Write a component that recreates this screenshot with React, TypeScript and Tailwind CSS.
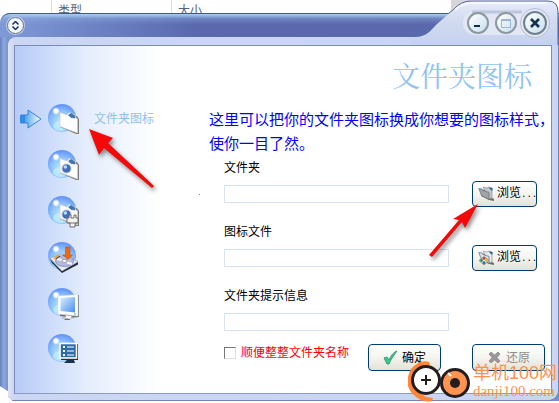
import React from "react";

const font = "font-['Liberation_Sans','Noto_Sans_CJK_SC',sans-serif]";

function Orb() {
  return (
    <>
      <circle cx="14" cy="14" r="14" fill="url(#orb)" />
      <ellipse cx="13" cy="22" rx="8" ry="5" fill="#c9f6ff" opacity=".6" />
      <circle cx="8" cy="7" r="4" fill="url(#shine)" />
    </>
  );
}

function Sheet({ camera, plug }: { camera?: boolean; plug?: boolean }) {
  return (
    <>
      <path d="M13 9l8 3 8 0 2 3v15l-3 0-16-7z" fill="#6d6a62" opacity=".85" />
      <path d="M12 8.500L19 11l2-2.500 6 2.500 1 3 1.500 1V29L12 22.500z" fill="#fdfdfe" stroke="#c9cfdb" strokeWidth=".7" />
      <path d="M20.500 11l2.500-1.500 3.500 2 .5 2.500-4-.5z" fill="#3d76b4" stroke="#254f80" strokeWidth=".5" />
      {camera && (
        <>
          <circle cx="18.500" cy="18.500" r="5" fill="#c3c8d6" />
          <circle cx="18.500" cy="18.500" r="4" fill="#416fbe" />
          <circle cx="17.300" cy="17" r="1.800" fill="#b8dcff" />
        </>
      )}
      {plug && (
        <>
          <path d="M21 19h2v3h3v-3h2v3h2v5h-3v4h-5v-4h-3v-5h2z" fill="#f2f2f0" stroke="#6f6c68" strokeWidth="1" />
          <path d="M20 27h9" stroke="#77736c" />
        </>
      )}
    </>
  );
}

const icons: { name: string; art: React.ReactNode }[] = [
  { name: "文件夹图标", art: <Sheet /> },
  { name: "图片", art: <Sheet camera /> },
  { name: "设备", art: <Sheet camera plug /> },
  {
    name: "磁盘",
    art: (
      <>
        <path d="M2 17l12 12 16-9v2.500L14 31 4 21z" fill="#252b3c" />
        <path d="M2 16l12-4 16 7.500L14 29z" fill="#e9ebf3" stroke="#8c93a8" strokeWidth=".6" />
        <ellipse cx="16.500" cy="19" rx="9" ry="5.500" fill="#b4b9de" stroke="#7f87b0" strokeWidth=".8" />
        <path d="M9 17l5 1M19 20.500l5 1.500" stroke="#f6f7ff" strokeWidth="2" />
        <ellipse cx="16.500" cy="19" rx="2.500" ry="1.500" fill="#fff" stroke="#777" strokeWidth=".6" />
        <path d="M6 17l5-4" stroke="#e9a13a" strokeWidth="1.800" />
        <path d="M8 17l4-3" stroke="#3a3a42" strokeWidth="1" />
        <path d="M17.500 5h4.500v8h2.500L20 17.500 15 13h2.500z" fill="#f0690c" stroke="#b84708" strokeWidth=".5" />
      </>
    ),
  },
  {
    name: "显示器",
    art: (
      <>
        <path d="M12 8l19-1v22l-9 1v2h-6l3-3-7-1z" fill="#5b5f62" opacity=".85" />
        <path d="M10 8l20-1.500V28l-20-2z" fill="#fff" stroke="#d5d9dd" strokeWidth=".6" />
        <path d="M12.500 10l14.500-1v15.500L12.500 23z" fill="url(#screen)" />
        <path d="M17 27l7 1-1 1.500h3l-4 1.500-8-1 4-1z" fill="#fff" stroke="#999" strokeWidth=".5" />
        <path d="M26 26h2" stroke="#40b956" />
      </>
    ),
  },
  {
    name: "设置",
    art: (
      <>
        <path d="M13 10h17v16h-4l1 3H16l3-3h-6z" fill="#143650" />
        <rect x="12" y="9.500" width="16.500" height="14.500" fill="#2c6da9" stroke="#fff" strokeWidth="1.600" />
        <path d="M19 13h7M19 17h7M19 21h7" stroke="#fff" strokeWidth="1.200" />
        <path d="M15 13h2M15 17h2M15 21h2" stroke="#fff" strokeWidth="2" />
      </>
    ),
  },
];

function Sidebar() {
  return (
    <nav className="flex w-[194px] shrink-0 flex-col gap-4 pt-[58px] pl-[5px]">
      {icons.map(({ name, art }, i) => (
        <div key={name} className="flex items-center">
          <span className="w-7">
            {i === 0 && (
              <svg width="22" height="20" viewBox="0 0 22 20" className="block">
                <path d="M1 6h7V1l13 9-13 9v-5H1z" fill="url(#pointer)" stroke="#3781dc" strokeWidth="1" strokeLinejoin="round" />
                <path d="M1 6v8M4 6v8" stroke="#2580e4" strokeWidth="1.500" />
              </svg>
            )}
          </span>
          <button aria-label={name} className="block h-[30px] w-8">
            <svg width="32" height="32" viewBox="0 0 32 32" className="block">
              <Orb />
              {art}
            </svg>
          </button>
          {i === 0 && <span className="pl-[14px] text-[12px] leading-4 whitespace-nowrap text-[#8fc1f0]">{name}</span>}
        </div>
      ))}
    </nav>
  );
}

function FolderIcon({ picture }: { picture?: boolean }) {
  return (
    <svg width="17" height="16" viewBox="0 0 17 16" className="shrink-0">
      <path d="M4 4l10-2v10l2 1v2l-5-1-8-4z" fill="#6b7075" />
      <path d="M5 1l4 1 2-1 3 1v10l-3 1z" fill={picture ? "#e6e8e9" : "#c2c4c5"} stroke="#84898d" strokeWidth=".6" />
      <path d="M10.500 1.500l4 .5v3l-2-1.500z" fill="#147193" />
      <path d="M.800 2.500L4 3l1 1.500 6 2v7L3.500 9.500z" fill={picture ? "#dfe1e2" : "#a1a3a5"} stroke="#6f757a" strokeWidth=".8" />
      {picture && (
        <>
          <path d="M6 6.500l5 4-5 4.500-5-4.500z" fill="#eee" stroke="#555" strokeWidth=".6" />
          <circle cx="6" cy="8.500" r="1.400" fill="#d63c2f" />
          <circle cx="8.500" cy="10.500" r="1.400" fill="#ddb71d" />
          <circle cx="3.500" cy="10.500" r="1.400" fill="#269849" />
          <circle cx="6" cy="12.700" r="1.400" fill="#246ac1" />
        </>
      )}
    </svg>
  );
}

const buttonBase =
  "flex shrink-0 items-center rounded-[4px] border border-[#003c74] bg-linear-to-b from-white via-[#f5f4ef] to-[#e4e2d7] whitespace-nowrap text-[12px] leading-4";

function Field({ id, label, browse }: { id: string; label: string; browse?: "folder" | "picture" }) {
  return (
    <div className="flex flex-col gap-[5px]">
      <label htmlFor={id} className="text-[12px] leading-4 text-black">{label}</label>
      <div className="flex h-[26px] items-center gap-[23px]">
        <input id={id} type="text" className="h-[18px] min-w-0 flex-1 border border-[#d5e3f2] bg-white px-1 text-[12px] outline-none" />
        {browse ? (
          <button className={`${buttonBase} h-[26px] w-[65px] gap-[2px] pl-[5px] text-black`}>
            <FolderIcon picture={browse === "picture"} />
            <span>
              浏览<span className="font-['Liberation_Mono',monospace] text-[9px]">...</span>
            </span>
          </button>
        ) : (
          <span className="w-[65px] shrink-0" />
        )}
      </div>
    </div>
  );
}

function MainForm() {
  return (
    <main className="flex min-w-0 flex-1 flex-col pt-[14px] pb-[22px]">
      <h1 className="pr-[19px] text-right font-['Liberation_Serif','Noto_Serif_CJK_SC','Noto_Sans_CJK_SC',serif] text-[28px] leading-9 font-normal text-[#8fc4f5]">
        文件夹图标
      </h1>
      <p className="mt-3 text-[15px] leading-6 whitespace-nowrap text-[#0000ff]">
        这里可以把你的文件夹图标换成你想要的图标样式，
        <br />
        使你一目了然。
      </p>
      <form className="mt-1 flex flex-col pl-[15px]" onSubmit={(e) => e.preventDefault()}>
        <div className="flex flex-col gap-[17px] pr-[14px]">
          <Field id="folder" label="文件夹" browse="folder" />
          <Field id="icon-file" label="图标文件" browse="picture" />
          <Field id="tip" label="文件夹提示信息" />
        </div>
        <div className="mt-[9px] flex items-start pr-[6px]">
          <label className="flex flex-1 items-center gap-[5px] pt-px text-[12px] leading-4 whitespace-nowrap text-[#ff0000]">
            <input type="checkbox" className="size-[12px] appearance-none border border-t-[#777] border-r-[#ddd] border-b-[#ddd] border-l-[#777] bg-white checked:bg-[#3781dc]" />
            顺便整整文件夹名称
          </label>
          <div className="flex shrink-0 gap-[31px]">
            <button className={`${buttonBase} h-[27px] w-[73px] gap-1 pl-[14px] text-black`}>
              <svg width="15" height="15" viewBox="0 0 15 15" className="shrink-0">
                <path d="M1 8l3-1 2 3C8 5 11 2 14 1 11 5 8 9 6 14H4z" fill="#3ccb8b" stroke="#248d67" strokeWidth=".8" />
              </svg>
              确定
            </button>
            <button className={`${buttonBase} h-[27px] w-[73px] gap-[5px] pl-[15px] text-[#8e8d87]`}>
              <svg width="13" height="13" viewBox="0 0 13 13" className="shrink-0">
                <path d="M1 3l2-2 3.500 3L10 1l2 2-3 3.500 3 3.500-2 2-3.500-3L3 12l-2-2 3-3.500z" fill="#999" stroke="#777" strokeWidth=".6" />
              </svg>
              还原
            </button>
          </div>
        </div>
      </form>
    </main>
  );
}

function RoundButton({ label, bold, children }: { label: string; bold?: boolean; children: React.ReactNode }) {
  return (
    <button
      aria-label={label}
      className={`flex items-center justify-center rounded-full border-2 bg-linear-to-br from-white to-[#c9dfec] ${
        bold ? "size-6 border-[#6f8292]" : "size-[22px] border-[#8a989f]"
      }`}
    >
      <svg width="12" height="12" viewBox="0 0 12 12">{children}</svg>
    </button>
  );
}

function TitleTab() {
  return (
    <div className="absolute top-0 right-0 h-[45px] w-[148px]">
      <svg width="148" height="45" viewBox="0 0 148 45" className="absolute inset-0">
        <path d="M40 0h20L40 14z" fill="#d6d6da" />
        <path d="M0 45V37H4C16 37 20 30 26 24L42 10Q50 1 60 1H137Q147 1 147 12V45z" fill="url(#tab)" />
        <path d="M38 13L42 10Q50 1 60 1H137Q147 1 147 12V45" fill="none" stroke="#535f96" />
        <path d="M44 10Q51 3 60 3H136" fill="none" stroke="#f6f8ff" strokeWidth="2" />
        <rect x="52" y="11" width="80" height="24" rx="12" fill="#e2e6f5" />
        <path d="M61 12h50" stroke="#a7b2d0" strokeWidth="3" opacity=".6" />
        <circle cx="124" cy="23" r="14.500" fill="#e6e9f5" stroke="#b4bdd4" />
      </svg>
      <div className="absolute top-[11px] right-3 flex items-center gap-[6px]">
        <RoundButton label="最小化">
          <path d="M2 9h6" stroke="#102d47" strokeWidth="2" />
        </RoundButton>
        <RoundButton label="最大化">
          <path d="M1.500 2.500h9v8h-9zM1.500 3.500h9" fill="none" stroke="#9db3ce" />
        </RoundButton>
        <RoundButton label="关闭" bold>
          <path d="M2 2l8 8M10 2l-8 8" stroke="#15334f" strokeWidth="2.600" />
        </RoundButton>
      </div>
    </div>
  );
}

function Watermark() {
  return (
    <div className="pointer-events-none absolute right-[2px] bottom-0 flex h-[42px] items-center whitespace-nowrap text-[#ff914d]">
      <svg width="64" height="42" viewBox="0 0 64 42" className="shrink-0">
        <path d="M21 2Q12-1 3 9-6 26 8 37q8 6 16 4l1-3-7-1Q4 29 7 15 11 5 22 5z" fill="#ff8639" />
        <circle cx="18" cy="20" r="13.500" fill="#fff" stroke="#251d1c" strokeWidth="3" />
        <path d="M18 15v10M13 20h10" stroke="#251d1c" strokeWidth="2" />
        <circle cx="47" cy="23" r="13.500" fill="#ff9351" stroke="#251d1c" strokeWidth="3" />
        <circle cx="47" cy="23" r="5" fill="#251d1c" />
        <path d="M40 13l3 3M31 13l4-3" stroke="#fff" strokeWidth="2" fill="none" />
      </svg>
      <div className="pl-px">
        <div className="text-[18px] leading-5">单机100网</div>
        <div className="font-['Liberation_Serif',serif] text-[15px] leading-4">danji100.com</div>
      </div>
    </div>
  );
}

function Pointers() {
  return (
    <>
      <svg width="72" height="66" viewBox="0 0 72 66" className="pointer-events-none absolute top-[124px] left-[83px] drop-shadow-[2px_3px_2px_rgba(0,0,0,0.45)]">
        <path d="M6 5l24 9-5 5 46 43-2 2-48-40-5 7z" fill="#f50808" />
      </svg>
      <svg width="52" height="56" viewBox="0 0 52 56" className="pointer-events-none absolute top-[203px] right-[78px] drop-shadow-[2px_3px_2px_rgba(0,0,0,0.45)]">
        <path d="M49 1L36 25l-3-6L3 54l-3-2 30-35-6-1z" fill="#f50808" />
      </svg>
    </>
  );
}

function Gradients() {
  return (
    <svg width="0" height="0" className="absolute" aria-hidden="true">
      <defs>
        <radialGradient id="orb" cx="50%" cy="65%" r="62%">
          <stop offset="0" stopColor="#c4efff" />
          <stop offset=".6" stopColor="#8fc4ff" />
          <stop offset="1" stopColor="#6596f8" />
        </radialGradient>
        <radialGradient id="shine">
          <stop offset=".4" stopColor="#fff" />
          <stop offset="1" stopColor="#fff" stopOpacity="0" />
        </radialGradient>
        <linearGradient id="screen" x2="1" y2="1">
          <stop stopColor="#d8f1ff" />
          <stop offset="1" stopColor="#4a8df0" />
        </linearGradient>
        <linearGradient id="pointer">
          <stop stopColor="#278ee8" />
          <stop offset="1" stopColor="#fff" />
        </linearGradient>
        <linearGradient id="tab" x2="0" y2="1">
          <stop stopColor="#e8ecfa" />
          <stop offset=".45" stopColor="#d1daf0" />
          <stop offset="1" stopColor="#c5d2ed" />
        </linearGradient>
      </defs>
    </svg>
  );
}

export default function App() {
  return (
    <div className={`relative w-full overflow-hidden bg-white pb-px ${font}`}>
      <Gradients />
      <div className="flex h-[13px] overflow-hidden pl-[51px] text-[12px] leading-[22px] text-[#52627b]">
        <span className="w-[120px] border-l border-[#dedede] pl-[6px]">类型</span>
        <span className="flex-1 border-l border-[#dedede] pl-[6px]">大小</span>
      </div>
      <div className="rounded-tl-[10px] bg-linear-to-r from-[#7f9ad8] via-[#5a69ae] via-35% to-[#5968aa] [clip-path:polygon(0_0,100%_0,100%_100%,13px_100%,8px_calc(100%-5px),8px_calc(100%-10px),0_calc(100%-15px))]">
        <header className="flex h-6 items-center rounded-tl-[10px] border-t border-[#45567f] bg-linear-to-b from-[#a8d2f1] via-[#8fafe0]/40 via-20% to-transparent to-45% pl-[7px]">
          <button aria-label="收起" className="flex size-[17px] items-center justify-center rounded-full border border-[#62718b] bg-[#f2f5fa] shadow-[0_0_0_1px_#c0cce5]">
            <svg width="9" height="9" viewBox="0 0 9 9">
              <path d="M1.500 3.500l3-3 3 3M1.500 5.500l3 3 3-3" fill="none" stroke="#182e68" strokeWidth="1.500" />
            </svg>
          </button>
        </header>
        <div className="bg-linear-to-r from-[#6683bd] via-[#8da8dd] via-[4px] to-[#7890ce] to-[8px] pl-2">
          <div className="rounded-tl-[8px] rounded-br-[10px] border-r border-b border-[#7583ae] bg-linear-to-r from-[#e0e5f5] via-[#cbd6f2] via-[6px] to-[#c9d6f1] pt-2 pr-[6px] pb-[6px] pl-[6px]">
            <div className="flex border border-[#7b8cb9] border-b-[#8d9bc2] bg-white bg-linear-to-r from-[#b6cbf7] via-[#e4edfd] via-[70px] to-white to-[145px]">
              <Sidebar />
              <MainForm />
            </div>
          </div>
        </div>
      </div>
      <TitleTab />
      <Pointers />
      <span className="absolute top-[194px] left-[199px] size-px bg-[#888]" />
      <Watermark />
    </div>
  );
}
